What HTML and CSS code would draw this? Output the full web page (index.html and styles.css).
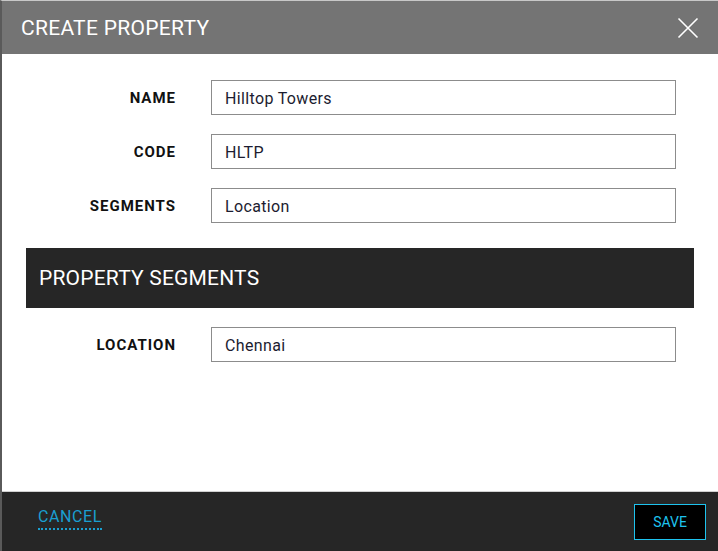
FILE: index.html
```html
<!DOCTYPE html>
<html>
<head>
<meta charset="utf-8">
<link rel="stylesheet" href="styles.css">
</head>
<body>
<div class="modal">
  <header class="modal-header">
    <h1 class="modal-title">CREATE PROPERTY</h1>
    <button class="close-btn" aria-label="Close">
      <svg width="22" height="22" viewBox="0 0 22 22"><path d="M1.5 1.5 L20.5 20.5 M20.5 1.5 L1.5 20.5" stroke="#fff" stroke-width="1.6" fill="none"/></svg>
    </button>
  </header>
  <main class="modal-body">
    <div class="form-grid">
      <label class="field-label">NAME</label>
      <div class="field-input">Hilltop Towers</div>
      <label class="field-label">CODE</label>
      <div class="field-input">HLTP</div>
      <label class="field-label">SEGMENTS</label>
      <div class="field-input">Location</div>
    </div>
    <div class="section-bar">PROPERTY SEGMENTS</div>
    <div class="form-grid">
      <label class="field-label">LOCATION</label>
      <div class="field-input">Chennai</div>
    </div>
  </main>
  <footer class="modal-footer">
    <a class="cancel-link">CANCEL</a>
    <button class="save-btn">SAVE</button>
  </footer>
</div>
</body>
</html>
```
FILE: styles.css
```css
html, body {
  margin: 0;
  padding: 0;
  height: 100%;
}
body {
  background: #fff;
  font-family: Roboto, "Liberation Sans", sans-serif;
}
.modal {
  height: 551px;
  box-sizing: border-box;
  border-top: 1px solid #c8c8c8;
  border-left: 2px solid #5a5a5a;
  display: flex;
  flex-direction: column;
}
.modal-header {
  height: 53px;
  background: #747474;
  display: flex;
  align-items: center;
  justify-content: space-between;
  padding: 0 19px 0 19px;
  flex-shrink: 0;
}
.modal-title {
  margin: 0;
  color: #fff;
  font-size: 21px;
  font-weight: 400;
  letter-spacing: 0.3px;
}
.close-btn {
  background: none;
  border: 0;
  padding: 0;
  width: 22px;
  height: 22px;
  display: flex;
}
.modal-body {
  flex: 1;
  padding-top: 26px;
}
.form-grid {
  display: grid;
  grid-template-columns: 173px 465px;
  column-gap: 36px;
  row-gap: 19px;
  align-items: center;
}
.field-label {
  text-align: right;
  font-weight: 700;
  font-size: 15px;
  letter-spacing: 1px;
  margin-right: -1px;
  color: #111;
}
.field-input {
  height: 35px;
  box-sizing: border-box;
  border: 1px solid #8c8c8c;
  padding: 1px 13px 0;
  display: flex;
  align-items: center;
  font-size: 16px;
  letter-spacing: 0.35px;
  color: #1c1c30;
}
.section-bar {
  margin: 25px 0 19px 24px;
  width: 668px;
  height: 60px;
  box-sizing: border-box;
  background: #262626;
  color: #fff;
  font-size: 21px;
  letter-spacing: 0.2px;
  display: flex;
  align-items: center;
  padding-left: 13px;
}
.modal-footer {
  height: 60px;
  box-sizing: border-box;
  border-top: 1px solid #d0d0d0;
  background: #262626;
  display: flex;
  align-items: center;
  justify-content: space-between;
  padding: 0 12px 0 36px;
  flex-shrink: 0;
}
.cancel-link {
  color: #1a9fd0;
  font-size: 16px;
  letter-spacing: 0.6px;
  border-bottom: 2px dotted #1a9fd0;
  padding-bottom: 2px;
  margin-top: -6px;
}
.save-btn {
  width: 72px;
  height: 36px;
  background: #000;
  border: 1px solid #1ec3ee;
  color: #1ec3ee;
  font-family: Roboto, "Liberation Sans", sans-serif;
  font-size: 14px;
  padding: 0;
}
```
